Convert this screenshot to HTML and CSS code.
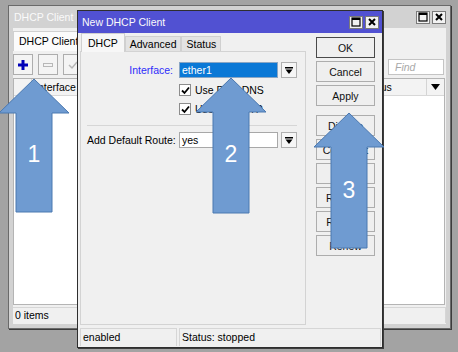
FILE: index.html
```html
<!DOCTYPE html>
<html lang="en">
<head>
    <meta charset="UTF-8">
    <title>DHCP Client</title>
    <link rel="stylesheet" href="styles.css">
</head>
<body>
    <div class="desktop">
        <!-- list window behind -->
        <div class="win win-back">
            <div class="titlebar">
                <span class="title">DHCP Client</span>
                <div class="title-btns">
                    <span class="tbtn"><svg width="10" height="10" viewBox="0 0 10 10"><rect x="1" y="1" width="8" height="8" fill="none" stroke="#000" stroke-width="1.2"/><rect x="1" y="1" width="8" height="2" fill="#000"/></svg></span>
                    <span class="tbtn"><svg width="10" height="10" viewBox="0 0 10 10"><path d="M2 2 L8 8 M8 2 L2 8" stroke="#000" stroke-width="2"/></svg></span>
                </div>
            </div>
            <div class="win-body">
                <div class="tabs">
                    <div class="tab active">DHCP Client</div>
                </div>
                <div class="toolbar">
                    <span class="tool"><svg width="12" height="12" viewBox="0 0 12 12"><path d="M6 1 V11 M1 6 H11" stroke="#0000b8" stroke-width="3"/></svg></span>
                    <span class="tool"><svg width="12" height="12" viewBox="0 0 12 12"><rect x="1.5" y="4.5" width="9" height="3" fill="none" stroke="#b8b8b8"/></svg></span>
                    <span class="tool"><svg width="12" height="12" viewBox="0 0 12 12"><path d="M2 6 L5 9 L10 3" fill="none" stroke="#b8b8b8" stroke-width="1.5"/></svg></span>
                    <div class="find">Find</div>
                </div>
                <div class="list">
                    <div class="list-head">
                        <div class="hcell flag"></div>
                        <div class="hcell name">Interface</div>
                        <div class="hcell grow"></div>
                        <div class="hcell stat">Status</div>
                        <div class="hcell drop"><svg width="9" height="6" viewBox="0 0 9 6"><path d="M0 0 H9 L4.5 6 Z" fill="#000"/></svg></div>
                    </div>
                </div>
                <div class="statusbar">
                    <div class="scell">0 items</div>
                </div>
            </div>
        </div>

        <!-- dialog in front -->
        <div class="win win-front">
            <div class="titlebar active">
                <span class="title">New DHCP Client</span>
                <div class="title-btns">
                    <span class="tbtn"><svg width="10" height="10" viewBox="0 0 10 10"><rect x="1" y="1" width="8" height="8" fill="none" stroke="#000" stroke-width="1.2"/><rect x="1" y="1" width="8" height="2" fill="#000"/></svg></span>
                    <span class="tbtn"><svg width="10" height="10" viewBox="0 0 10 10"><path d="M2 2 L8 8 M8 2 L2 8" stroke="#000" stroke-width="2"/></svg></span>
                </div>
            </div>
            <div class="dlg-body">
                <div class="dlg-main">
                    <div class="dlg-left">
                        <div class="tabs dlg-tabs">
                            <div class="tab active">DHCP</div>
                            <div class="tab">Advanced</div>
                            <div class="tab">Status</div>
                        </div>
                        <div class="panel">
                            <div class="field">
                                <span class="flabel link">Interface:</span>
                                <div class="input selected">ether1</div>
                                <span class="dd"><svg width="8" height="7" viewBox="0 0 8 7"><rect x="0" y="0" width="8" height="1.5" fill="#000"/><path d="M0.5 2.5 H7.5 L4 7 Z" fill="#000"/></svg></span>
                            </div>
                            <div class="check-row">
                                <span class="cb"><svg width="9" height="9" viewBox="0 0 9 9"><path d="M1 4.5 L3.5 7 L8 1.5" fill="none" stroke="#000" stroke-width="1.8"/></svg></span>
                                Use Peer DNS
                            </div>
                            <div class="check-row">
                                <span class="cb"><svg width="9" height="9" viewBox="0 0 9 9"><path d="M1 4.5 L3.5 7 L8 1.5" fill="none" stroke="#000" stroke-width="1.8"/></svg></span>
                                Use Peer NTP
                            </div>
                            <div class="sep"></div>
                            <div class="field">
                                <span class="flabel">Add Default Route:</span>
                                <div class="input">yes</div>
                                <span class="dd"><svg width="8" height="7" viewBox="0 0 8 7"><rect x="0" y="0" width="8" height="1.5" fill="#000"/><path d="M0.5 2.5 H7.5 L4 7 Z" fill="#000"/></svg></span>
                            </div>
                        </div>
                    </div>
                    <div class="dlg-btns">
                        <button class="btn default">OK</button>
                        <button class="btn">Cancel</button>
                        <button class="btn">Apply</button>
                        <button class="btn group">Disable</button>
                        <button class="btn">Comment</button>
                        <button class="btn">Copy</button>
                        <button class="btn">Remove</button>
                        <button class="btn">Release</button>
                        <button class="btn">Renew</button>
                    </div>
                </div>
                <div class="statusbar dlg-status">
                    <div class="scell">enabled</div>
                    <div class="scell wide">Status: stopped</div>
                </div>
            </div>
        </div>

        <!-- callout arrows -->
        <svg class="arrows" width="458" height="352" viewBox="0 0 458 352">
            <path class="arrow" d="M34 79 L69 113 L52 113 L52 212 L16 212 L16 113 L-1 113 Z"/>
            <path class="arrow" d="M231 78 L266 112 L249 112 L249 213 L213 213 L213 112 L196 112 Z"/>
            <path class="arrow" d="M349 113 L384 147 L367 147 L367 248 L331 248 L331 147 L314 147 Z"/>
            <text class="num" x="34" y="162">1</text>
            <text class="num" x="231" y="162">2</text>
            <text class="num" x="349" y="198">3</text>
        </svg>
    </div>
</body>
</html>
```

FILE: styles.css
```css
* {
    margin: 0;
    padding: 0;
    box-sizing: border-box;
}

body {
    font-family: 'Liberation Sans', Arial, sans-serif;
    font-size: 10.5px;
    color: #000;
    background: #a3a3a3;
}

.desktop {
    position: relative;
    width: 458px;
    height: 352px;
    overflow: hidden;
}

/* windows */
.win {
    position: absolute;
    display: flex;
    flex-direction: column;
    border: 1px solid #6a6a6a;
    box-shadow: 1px 1px 0 #3c3c3c;
}

.win-back {
    left: 8px;
    top: 5px;
    width: 443px;
    height: 324px;
    background: #d2d2d2;
    padding: 0 4px 4px 4px;
}

.win-front {
    left: 77px;
    top: 10px;
    width: 306px;
    height: 338px;
    background: #f0f0f0;
    border-color: #2e2e2e;
}

.titlebar {
    height: 22px;
    display: flex;
    align-items: center;
    justify-content: space-between;
    color: #fafafa;
    background: #d2d2d2;
    padding: 0 0 0 1px;
    flex-shrink: 0;
}

.titlebar.active {
    background: #5151d2;
    padding: 0 3px 0 4px;
}

.title-btns {
    display: flex;
    gap: 2px;
}

.tbtn {
    width: 14px;
    height: 13px;
    display: flex;
    align-items: center;
    justify-content: center;
    background: #f2f2f2;
    border: 1px solid #7a7a7a;
}

/* back window */
.win-body {
    flex: 1;
    display: flex;
    flex-direction: column;
    background: #f0f0f0;
    padding-bottom: 1px;
}

.tabs {
    display: flex;
    padding-top: 3px;
    height: 23px;
}

.tab {
    padding: 0 5px;
    line-height: 18px;
    background: #e3e3e3;
    border: 1px solid #d0d0d0;
    border-bottom: none;
}

.tab.active {
    background: #fbfbfb;
    line-height: 19px;
}

.toolbar {
    display: flex;
    align-items: flex-end;
    gap: 5px;
    margin-top: 3px;
    height: 21px;
}

.tool {
    width: 20px;
    height: 21px;
    display: flex;
    align-items: center;
    justify-content: center;
    border: 1px solid #adadad;
    background: #f4f4f4;
}

.find {
    margin-left: auto;
    margin-right: 2px;
    width: 56px;
    height: 16px;
    padding-left: 6px;
    line-height: 14px;
    background: #fff;
    border: 1px solid #c4c4c4;
    color: #a8a8a8;
    font-style: italic;
}

.list {
    flex: 1;
    margin-top: 3px;
    margin-right: 1px;
    background: #fff;
    border: 1px solid #b4b4b4;
}

.list-head {
    display: flex;
    height: 17px;
    background: #f3f3f3;
    border-bottom: 1px solid #d8d8d8;
}

.hcell {
    line-height: 16px;
    padding-left: 3px;
    border-right: 1px solid #d4d4d4;
}

.hcell.flag { width: 18px; }
.hcell.name { width: 70px; }
.hcell.grow { flex: 1; }
.hcell.stat { width: 68px; }

.hcell.drop {
    width: 17px;
    border-right: none;
    display: flex;
    align-items: center;
    justify-content: center;
    padding: 0;
}

.statusbar {
    display: flex;
    gap: 2px;
    margin-top: 2px;
    height: 16px;
}

.scell {
    line-height: 15px;
    padding-left: 2px;
    border-top: 1px solid #d6d6d6;
    border-right: 1px solid #d6d6d6;
    width: 100%;
}

/* dialog */
.dlg-body {
    flex: 1;
    display: flex;
    flex-direction: column;
    padding: 0 1px 1px 2px;
}

.dlg-main {
    flex: 1;
    display: flex;
    gap: 10px;
}

.dlg-left {
    width: 226px;
    display: flex;
    flex-direction: column;
}

.dlg-tabs {
    padding-top: 0;
    height: 18px;
    padding-left: 1px;
    align-items: flex-end;
}

.dlg-tabs .tab {
    line-height: 14px;
    padding: 0 4px;
}

.dlg-tabs .tab.active {
    line-height: 18px;
    padding: 0 6px;
    background: #f7f7f7;
    margin-bottom: -1px;
    position: relative;
    z-index: 1;
}

.panel {
    flex: 1;
    background: #f0f0f0;
    border: 1px solid #d3d3d3;
    padding: 10px 8px 0 6px;
}

.field {
    display: flex;
    align-items: center;
    height: 16px;
}

.flabel {
    width: 86px;
    flex-shrink: 0;
    white-space: nowrap;
    text-align: right;
    margin-right: 6px;
}

.flabel.link {
    color: #2d2dfa;
}

.input {
    width: 99px;
    height: 16px;
    line-height: 14px;
    padding-left: 2px;
    background: #fff;
    border: 1px solid #a8a8a8;
    margin-right: 3px;
}

.input.selected {
    background: #0a78d6;
    color: #fff;
    border-color: #8aa6c4;
}

.dd {
    width: 16px;
    height: 16px;
    display: flex;
    align-items: center;
    justify-content: center;
    background: #f6f6f6;
    border: 1px solid #b0b0b0;
}

.check-row {
    display: flex;
    align-items: center;
    gap: 4px;
    height: 12px;
    margin-top: 6px;
    padding-left: 92px;
}

.check-row + .check-row {
    margin-top: 7px;
}

.cb {
    width: 12px;
    height: 12px;
    display: flex;
    align-items: center;
    justify-content: center;
    background: #fff;
    border: 1px solid #8c8c8c;
}

.sep {
    height: 1px;
    background: #d6d6d6;
    margin: 10px 0 6px 0;
    width: 210px;
}

.dlg-btns {
    width: 59px;
    display: flex;
    flex-direction: column;
    gap: 3px;
    padding-top: 4px;
}

.btn {
    height: 21px;
    font: inherit;
    color: #111;
    background: #efefef;
    border: 1px solid #adadad;
}

.btn.default {
    border-color: #4a4a4a;
}

.btn.group {
    margin-top: 6px;
}

.dlg-status {
    margin-top: 3px;
    height: 18px;
}

.dlg-status .scell {
    width: 97px;
    line-height: 17px;
    border-left: 1px solid #d6d6d6;
}

.dlg-status .scell.wide {
    flex: 1;
}

/* callouts */
.arrows {
    position: absolute;
    left: 0;
    top: 0;
    pointer-events: none;
}

.arrow {
    fill: #6f9bd1;
    stroke: #4a78b0;
    stroke-width: 1;
}

.num {
    fill: #fff;
    font-family: 'Liberation Sans', Arial, sans-serif;
    font-size: 23px;
    text-anchor: middle;
}
```
